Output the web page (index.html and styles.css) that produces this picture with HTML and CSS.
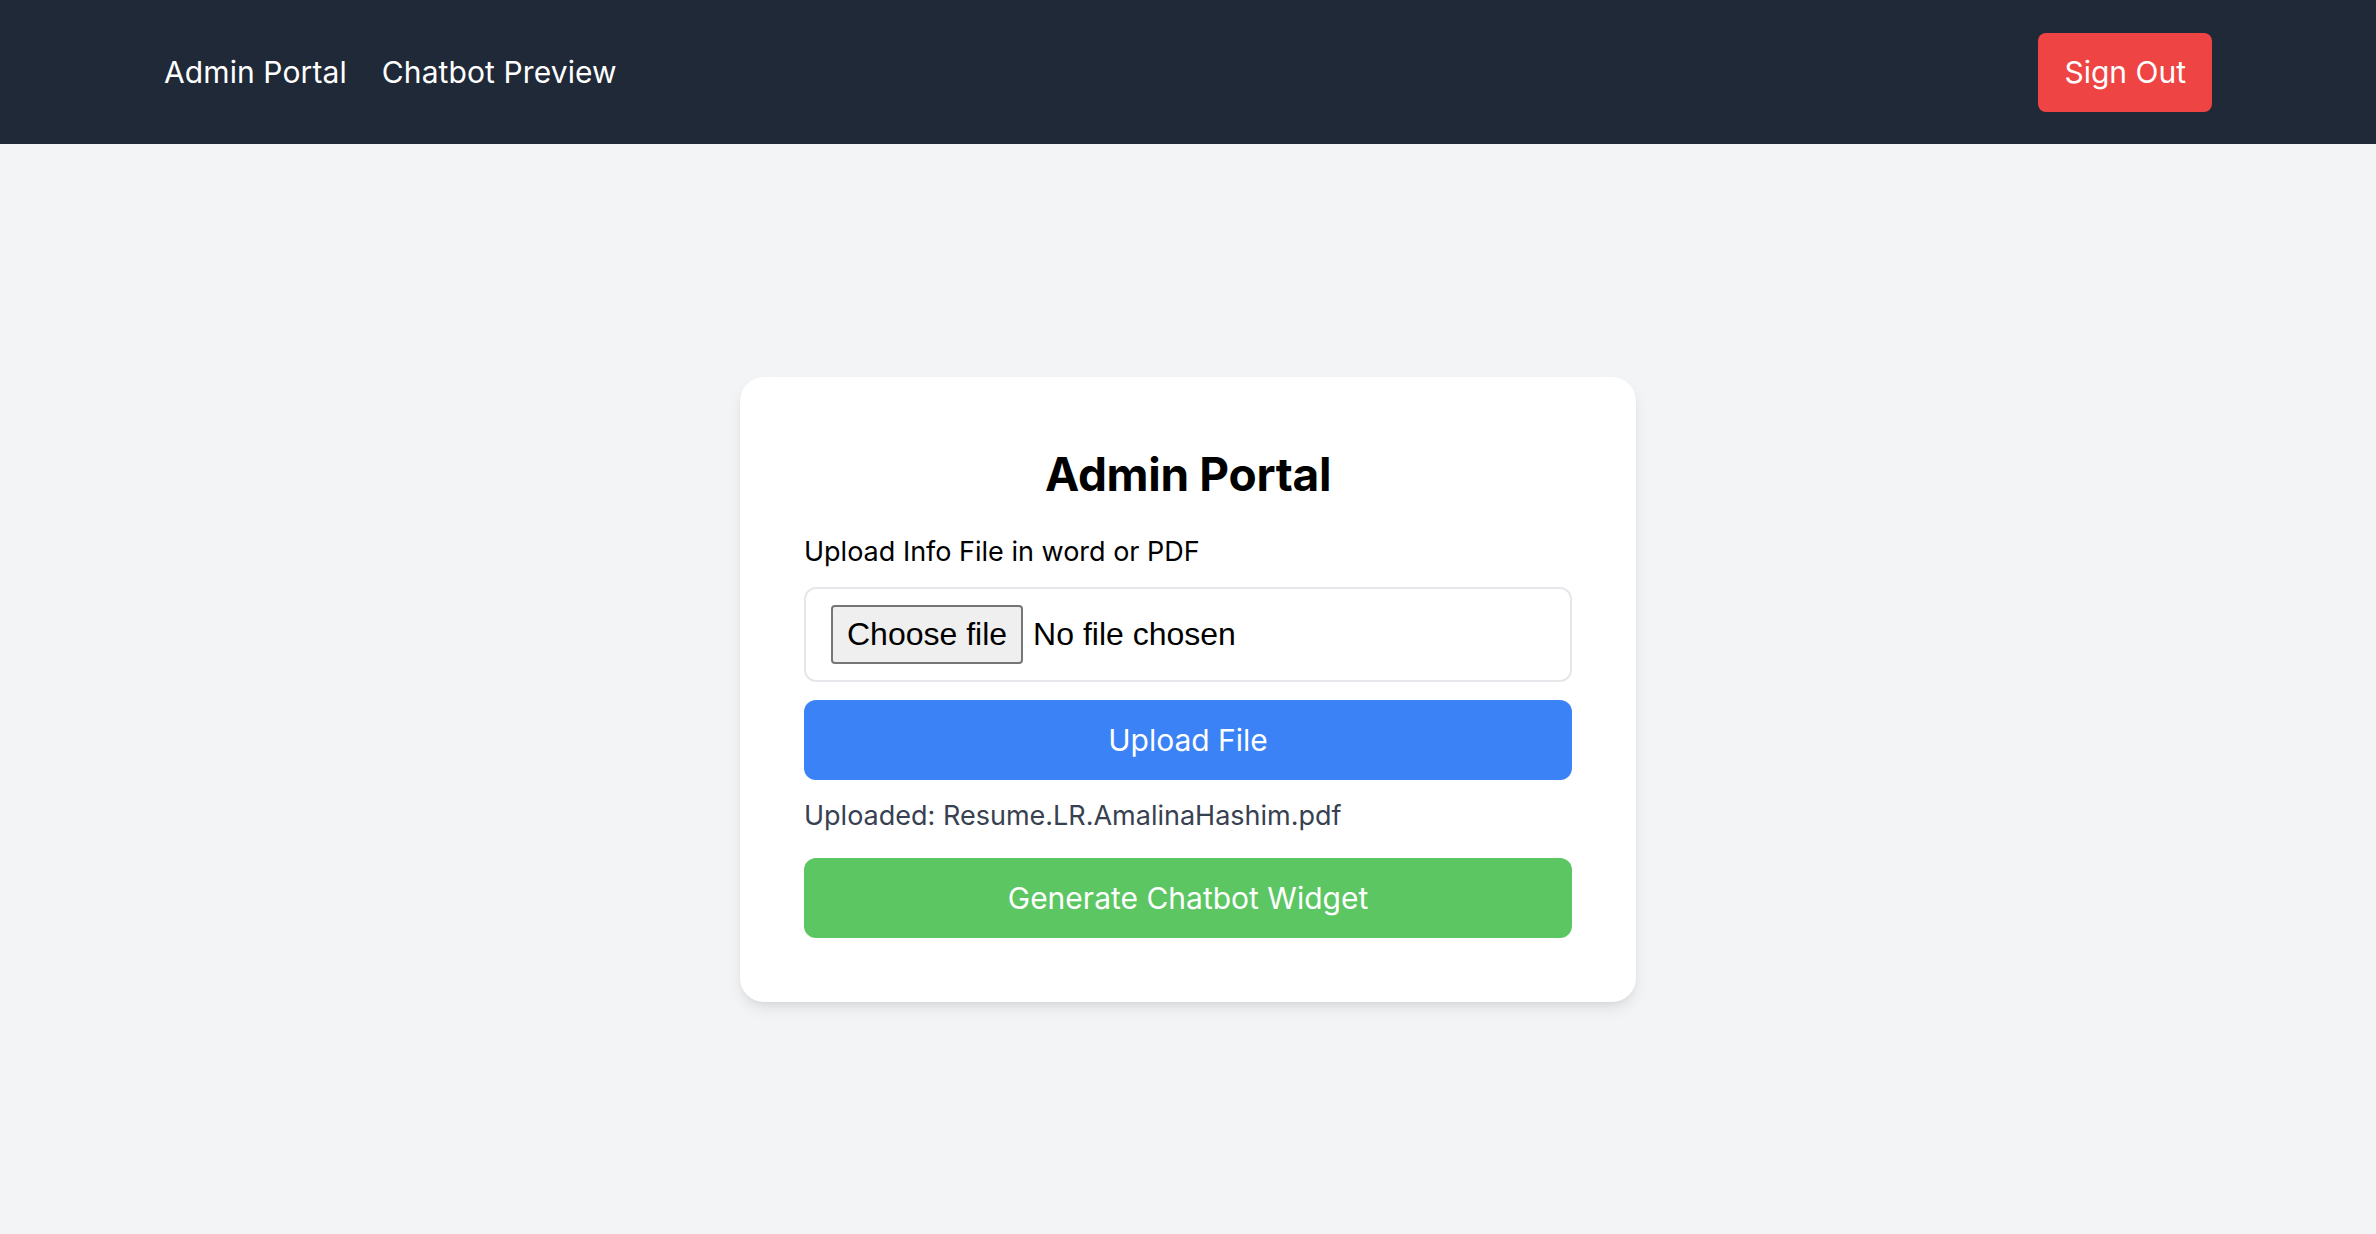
FILE: index.html
```html
<!DOCTYPE html>
<html lang="en">
<head>
<meta charset="utf-8">
<title>Admin Portal</title>
<link rel="stylesheet" href="styles.css">
</head>
<body>
<header class="topbar">
  <nav class="nav">
    <a class="nav-link" href="#">Admin Portal</a>
    <a class="nav-link" href="#">Chatbot Preview</a>
  </nav>
  <button class="btn-signout" type="button">Sign Out</button>
</header>
<main class="main">
  <section class="card">
    <h1 class="card-title">Admin Portal</h1>
    <p class="field-label">Upload Info File in word or PDF</p>
    <label class="file-field">
      <span class="file-btn">Choose file</span>
      <span class="file-name">No file chosen</span>
      <input class="file-input" type="file" accept=".doc,.docx,.pdf">
    </label>
    <button class="btn btn-upload" type="button">Upload File</button>
    <p class="uploaded">Uploaded: Resume.LR.AmalinaHashim.pdf</p>
    <button class="btn btn-generate" type="button">Generate Chatbot Widget</button>
  </section>
</main>
</body>
</html>
```
FILE: styles.css
```css
* { box-sizing: border-box; }
html, body { margin: 0; padding: 0; }
body {
  background: #f3f4f6;
  font-family: Inter, "Noto Sans", "Liberation Sans", sans-serif;
  color: #111827;
  min-height: 100vh;
}
.topbar {
  height: 144px;
  background: #1f2937;
  display: flex;
  align-items: center;
  justify-content: space-between;
  padding: 0 164px;
}
.nav {
  display: flex;
  gap: 35px;
  align-items: center;
}
.nav-link {
  color: #ffffff;
  text-decoration: none;
  font-size: 30px;
  line-height: 40px;
  letter-spacing: 0.1px;
}
.btn-signout {
  background: #ef4444;
  color: #ffffff;
  border: none;
  border-radius: 8px;
  font-family: inherit;
  font-size: 30px;
  line-height: 40px;
  padding: 19px 26px 20px;
  cursor: pointer;
}
.main {
  min-height: calc(100vh - 144px);
  display: flex;
  align-items: center;
  justify-content: center;
}
.card {
  width: 896px;
  background: #ffffff;
  border-radius: 24px;
  padding: 64px;
  box-shadow: 0 8px 16px -2px rgba(0,0,0,0.09), 0 3px 6px -2px rgba(0,0,0,0.06);
  display: flex;
  flex-direction: column;
}
.card-title {
  margin: 6px 0 31px;
  text-align: center;
  font-size: 46px;
  line-height: 54px;
  font-weight: 700;
  color: #000000;
  letter-spacing: -0.3px;
}
.field-label {
  margin: 0 0 15px;
  font-size: 27px;
  line-height: 40px;
  color: #000000;
}
.file-field {
  display: flex;
  align-items: center;
  gap: 10px;
  border: 2px solid #e5e7eb;
  border-radius: 12px;
  padding: 16px 25px;
  cursor: pointer;
  font-family: "Liberation Sans", Arial, sans-serif;
  font-size: 32px;
  color: #000000;
}
.file-btn {
  background: #efefef;
  border: 2px solid #767676;
  border-radius: 4px;
  padding: 10px 14px;
  line-height: 35px;
}
.file-name { line-height: 35px; }
.file-input { display: none; }
.btn {
  width: 100%;
  border: none;
  border-radius: 12px;
  color: #ffffff;
  font-family: inherit;
  font-size: 30px;
  line-height: 40px;
  padding: 20px;
  cursor: pointer;
}
.btn-upload {
  margin-top: 18px;
  background: #3b82f6;
}
.uploaded {
  margin: 16px 0 22px;
  font-size: 27px;
  line-height: 40px;
  color: #374151;
}
.btn-generate {
  background: #5bc662;
}
```
